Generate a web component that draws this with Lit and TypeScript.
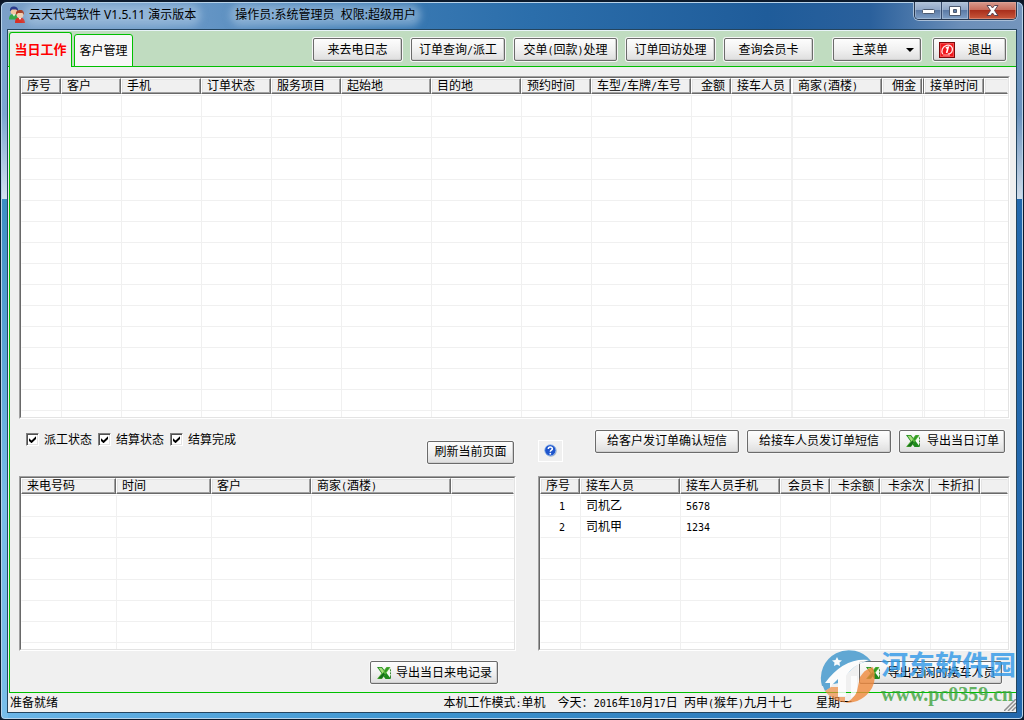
import { LitElement, html, css, svg, nothing } from "lit";
import { customElement, property } from "lit/decorators.js";
import { classMap } from "lit/directives/class-map.js";

/** Half-width runs are set in a narrow fixed-pitch face, two to one ideograph. */
const mixed = (text: string) =>
  text
    .split(/([\x20-\x7e]+)/)
    .filter((part) => part !== "")
    .map((part) => (/^[\x20-\x7e]/.test(part) ? html`<span class="half">${part}</span>` : part));

const baseText = css`
  :host {
    font: 12px/16px "Liberation Sans", "Noto Sans CJK SC", sans-serif;
    color: #000;
  }
  * {
    box-sizing: border-box;
  }
  .half {
    font-family: "DejaVu Sans Mono", monospace;
    font-size: 10px;
    line-height: 0;
    white-space: pre;
  }
`;

interface Column {
  label: string;
  width?: number;
  align?: "right" | "index";
}

@customElement("data-grid")
export class DataGrid extends LitElement {
  @property({ attribute: false }) columns: Column[] = [];
  @property({ attribute: false }) rows: string[][] = [];
  @property({ type: Number }) lines = 24;

  static styles = [
    baseText,
    css`
      :host {
        display: block;
        min-width: 0;
        min-height: 0;
        overflow: hidden;
        background: #fff;
        border: 1px solid #a0a0a0;
        border-right-color: #fff;
        border-bottom-color: #fff;
      }
      .well {
        height: 100%;
        overflow: hidden;
        border: 1px solid #696969;
        border-right-color: #e3e3e3;
        border-bottom-color: #e3e3e3;
      }
      table {
        width: 100%;
        table-layout: fixed;
        border-collapse: separate;
        border-spacing: 0;
      }
      th {
        padding: 0 0 1px;
        font-weight: normal;
        text-align: left;
      }
      .head {
        height: 16px;
        line-height: 15px;
        padding: 0 5px;
        overflow: hidden;
        white-space: nowrap;
        background: #f0f0f0;
        border: 1px solid #fff;
        border-right-color: #696969;
        border-bottom-color: #696969;
        box-shadow: inset -1px -1px #a0a0a0, inset 1px 1px #e3e3e3;
      }
      th:last-child .head {
        border-right-color: #f0f0f0;
        box-shadow: inset 0 -1px #a0a0a0, inset 1px 1px #e3e3e3;
      }
      .narrow .head {
        padding: 0;
      }
      td {
        height: 21px;
        padding: 0 5px;
        line-height: 20px;
        white-space: nowrap;
        overflow: hidden;
        border-top: 1px solid #f0f0f0;
        border-left: 1px solid #f0f0f0;
      }
      td:first-child {
        border-left-color: #fff;
      }
      td.narrow {
        padding: 0;
      }
      .right {
        text-align: right;
      }
      td.index {
        text-align: right;
        padding-right: 15px;
      }
    `,
  ];

  render() {
    const count = Math.max(this.lines, this.rows.length);
    const kind = (c: Column) =>
      classMap({
        right: c.align === "right",
        index: c.align === "index",
        narrow: (c.width ?? 99) < 3,
      });
    return html`<div class="well">
      <table>
        <colgroup>
          ${this.columns.map((c) => (c.width ? html`<col style="width:${c.width}px" />` : html`<col />`))}
        </colgroup>
        <thead>
          <tr>
            ${this.columns.map((c) => html`<th class=${kind(c)}><div class="head">${mixed(c.label)}</div></th>`)}
          </tr>
        </thead>
        <tbody>
          ${Array.from({ length: count }, (_, r) => html`<tr>
            ${this.columns.map((c, i) => html`<td class=${kind(c)}>${mixed(this.rows[r]?.[i] ?? "")}</td>`)}
          </tr>`)}
        </tbody>
      </table>
    </div>`;
  }
}

const excelIcon = svg`<svg class="icon" width="16" height="14" viewBox="0 0 16 14">
  <path d="M9.500 3H14.500V12H9z" fill="#f4fbf0" stroke="#b4d8ac" stroke-width="1"/>
  <path d="M14.500 3.500V5M14.500 6.500V8M14.500 9.500V12" stroke="#3a8a35"/>
  <path d="M1 1H6L15 13H9.500z" fill="#1d8a1c"/>
  <path d="M10.500 1H14.500L6 13H1z" fill="#58b53a"/>
  <path d="M2.500 1.700H5.500L8 5L6.500 7.500z" fill="#a5dc7a"/>
  <path d="M2 12.500L7.500 6.500L9 8.500L5.700 12.500z" fill="#16701b"/>
  <path d="M11 1.500H13.500L9.500 6.500L8.500 5z" fill="#2f9a26"/>
</svg>`;

const powerIcon = svg`<svg class="icon" width="16" height="16" viewBox="0 0 16 16">
  <rect x="0.500" y="0.500" width="15" height="15" fill="#f0181c" stroke="#7c0a0c"/>
  <rect x="1.500" y="1.500" width="13" height="13" fill="none" stroke="#ff6a6a" stroke-opacity="0.600"/>
  <path d="M3.800 12.200C1.800 9 3.300 4.300 7.600 3.300C11.500 2.500 14 5 13.300 8.300C12.800 11 10.500 12.300 9 11.800" fill="none" stroke="#ffe4e4" stroke-width="1.300"/>
  <path d="M4 13H11" stroke="#ffb0b0"/>
  <path d="M6.800 6L9.200 5.200L7.600 11" fill="none" stroke="#fff" stroke-width="1.600"/>
</svg>`;

const usersIcon = svg`<svg width="18" height="18" viewBox="0 0 18 18">
  <path d="M1 13.500C1 9 3 8 6 8s4 1.500 4.500 5.500z" fill="#37a84a"/>
  <path d="M4.500 8L6 10.500L7.500 8z" fill="#fff"/>
  <circle cx="6" cy="5" r="3.500" fill="#f3c7a2"/>
  <path d="M2 5.500C1.500 1 4 0.300 6.500 0.500S10.500 3 10 5L8 3.500H4z" fill="#2b3c8d"/>
  <path d="M7 17C7 12 9 11.500 12 11.500s4.500 1.500 5 5.500z" fill="#d93025"/>
  <path d="M10.500 11.500L12 14L13.500 11.500z" fill="#fff"/>
  <circle cx="12" cy="8.500" r="3.500" fill="#f6cfae"/>
  <path d="M8 9C7.500 4.500 10 4 12.500 4S16.500 6 16 9L14.500 7H10z" fill="#a63a22"/>
</svg>`;

const helpIcon = svg`<svg width="13" height="13" viewBox="0 0 13 13">
  <circle cx="7" cy="7" r="5.700" fill="#a9b4bf"/>
  <circle cx="6.300" cy="6.300" r="5.600" fill="#1f55cc" stroke="#9cc0ef" stroke-width="0.800"/>
  <path d="M4.300 5C4.300 2.500 8.500 2.500 8.400 4.900C8.300 6.300 6.400 6.200 6.300 7.700" fill="none" stroke="#fff" stroke-width="1.500"/>
  <circle cx="6.300" cy="9.700" r="0.900" fill="#fff"/>
</svg>`;

const siteLogo = svg`<svg class="logo" width="58" height="58" viewBox="0 0 58 58">
  <path d="M3 39A28 28 0 0 1 52 14Q40 14 30 25L20 36L3 39z" fill="#3d96cc"/>
  <path d="M3 37L11 36V41L6 44z" fill="#3d96cc"/>
  <path d="M6 44L12 40H19V50H26V55.500Q13 54 6 44z" fill="#f08a3c" fill-opacity="0.850"/>
  <path d="M54 20Q58 32 53 41Q44 56 26 56Q34 53 38 44L41 30Q46 22 54 20z" fill="#f08a3c"/>
  <path d="M6 36Q25 10 50 13Q34 18 27 29V49H19V32L11 40V36z" fill="#fff"/>
  <path d="M32 29H38V43Q37 49 32 51z" fill="#fff"/>
  <path d="M18 10l1.500 3 3.500.500-2.500 2 .500 3.500-3-1.500-3 1.500.500-3.500-2.500-2 3.500-.500z" fill="#fff"/>
</svg>`;

const orderColumns: Column[] = [
  { label: "序号", width: 40 },
  { label: "客户", width: 60 },
  { label: "手机", width: 80 },
  { label: "订单状态", width: 70 },
  { label: "服务项目", width: 70 },
  { label: "起始地", width: 90 },
  { label: "目的地", width: 90 },
  { label: "预约时间", width: 70 },
  { label: "车型/车牌/车号", width: 100 },
  { label: "金额", width: 40, align: "right" },
  { label: "接车人员", width: 60 },
  { label: "", width: 1 },
  { label: "商家(酒楼)", width: 90 },
  { label: "佣金", width: 40, align: "right" },
  { label: "", width: 2 },
  { label: "接单时间", width: 60 },
  { label: "" },
];

const callColumns: Column[] = [
  { label: "来电号码", width: 95 },
  { label: "时间", width: 95 },
  { label: "客户", width: 100 },
  { label: "商家(酒楼)", width: 140 },
  { label: "" },
];

const driverColumns: Column[] = [
  { label: "序号", width: 40, align: "index" },
  { label: "接车人员", width: 100 },
  { label: "接车人员手机", width: 100 },
  { label: "会员卡", width: 50, align: "right" },
  { label: "卡余额", width: 50, align: "right" },
  { label: "卡余次", width: 50, align: "right" },
  { label: "卡折扣", width: 50, align: "right" },
  { label: "" },
];

const drivers = [
  ["1", "司机乙", "5678"],
  ["2", "司机甲", "1234"],
];

@customElement("app-root")
export class AppRoot extends LitElement {
  static styles = [
    baseText,
    css`
      :host {
        display: block;
        height: 100vh;
        background: #0b1626;
      }
      button {
        font: inherit;
        color: inherit;
        margin: 0;
        padding: 0;
        cursor: default;
      }
      .window {
        position: relative;
        height: 100%;
        display: flex;
        flex-direction: column;
        padding: 0 6px 6px;
        border: 1px solid #0c1a2c;
        border-width: 2px 1px 1px;
        border-radius: 7px 7px 5px 5px;
        overflow: hidden;
        background:
          linear-gradient(90deg, #7ba0c8 0, #6f9cc9 15%, #3878b2 40%, #2b6eab 52%, #1f5c9a 75%, #2a609c 85%, #6c8fb9 94%, #7495bc) 0 0 / 100% 28px no-repeat,
          linear-gradient(#78a3cf, #7ba7d3 50%, #d3e2ef) 0 28px / 7px 169px no-repeat,
          linear-gradient(#6f92bb, #6b93bf 50%, #d0dce9) 100% 28px / 7px 169px no-repeat,
          linear-gradient(#3d8fc4 28%, #78bde9 70%) 0 0 / 7px 100% no-repeat,
          linear-gradient(90deg, #6bb6e8, #3e95d0 40%, #2268ad);
        box-shadow: inset 0 0 0 1px #b8d3ea;
      }
      .title {
        flex: none;
        display: flex;
        align-items: flex-start;
        height: 27px;
      }
      .caption {
        display: flex;
        align-items: center;
        height: 26px;
        padding-left: 1px;
        font-family: "Noto Sans", "Noto Sans CJK SC", sans-serif;
        white-space: pre;
      }
      .caption svg {
        margin-right: 3px;
      }
      .glow {
        height: 12px;
        line-height: 12px;
        border-radius: 6px;
        background: #b4cee680;
        box-shadow: 0 0 7px 5px #b4cee680;
      }
      .operator {
        margin-left: 39px;
      }
      .controls {
        display: flex;
        margin-left: auto;
        border: 1px solid #26374f;
        border-top: 0;
        border-radius: 0 0 5px 5px;
        overflow: hidden;
        box-shadow: 0 0 0 1px #a9bfd8;
      }
      .controls button {
        display: grid;
        place-items: center;
        width: 27px;
        height: 17px;
        border: 0;
        border-right: 1px solid #34486a;
        background: linear-gradient(#b1c2d9, #8da5c6 48%, #5c7ba6 50%, #7f9fc6);
        box-shadow: inset 0 0 0 1px #b9cade88;
      }
      .controls .close {
        width: 47px;
        border-right: 0;
        background: linear-gradient(#d79a8e, #c66a59 48%, #a92f1c 50%, #c9583c);
        box-shadow: inset 0 0 0 1px #e3aa9c88;
      }
      .client {
        flex: 1;
        min-height: 0;
        display: flex;
        flex-direction: column;
        border: 1px solid #24455f;
        background: #f0f0f0;
      }
      .toolbar {
        flex: none;
        display: flex;
        align-items: flex-end;
        height: 37px;
        padding: 0 10px 0 1px;
        background: #c0dcc0;
        border-top: 1px solid #e8f3f8;
        border-bottom: 1px solid #00c000;
      }
      .tab {
        height: 33px;
        width: 59px;
        border: 1px solid #00c000;
        border-radius: 3px 3px 0 0;
        background: #f7f7f7;
        margin: 0 0 -1px 2px;
      }
      .tab.active {
        width: 63px;
        height: 35px;
        margin-left: 0;
        border-bottom: 0;
        background: #f0f0f0;
        color: #f00;
        font-weight: bold;
        font-size: 13px;
      }
      .commands {
        display: flex;
        gap: 9px;
        margin: 0 0 5px auto;
      }
      .btn {
        display: flex;
        align-items: center;
        justify-content: center;
        height: 23px;
        padding: 0 10px;
        white-space: nowrap;
        background: linear-gradient(#fdfdfd, #f1f1f1 50%, #dedede);
        border: 1px solid #6b6b6b;
        border-radius: 2px;
        box-shadow: 0 0 0 1px #f6f6f6, inset -1px -1px #cfcfcf;
      }
      .commands .btn {
        min-width: 89px;
        padding: 0 7px;
      }
      .commands .wide {
        min-width: 103px;
      }
      .commands .menu {
        min-width: 88px;
        margin-left: 11px;
        padding: 0 6px 0 18px;
        justify-content: space-between;
      }
      .commands .exit {
        min-width: 73px;
        margin-left: 3px;
        padding: 0 13px 0 5px;
        justify-content: space-between;
      }
      .caret {
        border: 4px solid transparent;
        border-top-color: #000;
        border-bottom: 0;
      }
      .page {
        flex: 1;
        min-height: 0;
        display: flex;
        flex-direction: column;
        margin-left: 1px;
        padding: 9px 6px 0 9px;
        border-left: 1px solid #00c000;
        border-bottom: 1px solid #00c000;
      }
      .orders {
        flex: 342 1 0;
      }
      .split {
        display: grid;
        grid-template-columns: 497fr 472fr;
        column-gap: 22px;
      }
      .middle {
        flex: none;
        height: 57px;
      }
      .lists {
        flex: 176 1 0;
        min-height: 0;
        grid-template-rows: minmax(0, 1fr);
      }
      .exports {
        flex: none;
        padding: 10px 0 8px;
        justify-items: end;
      }
      .row {
        display: flex;
        align-items: flex-start;
      }
      .checks {
        display: flex;
        gap: 6px;
        padding: 13px 0 0 7px;
      }
      .checks label {
        display: flex;
        align-items: center;
        gap: 5px;
      }
      .checks input {
        appearance: none;
        display: grid;
        place-items: center;
        width: 13px;
        height: 13px;
        margin: 0;
        background: #fff;
        border: 1px solid #808080;
        border-right-color: #fff;
        border-bottom-color: #fff;
        box-shadow: inset 1px 1px #505050, inset -1px -1px #e3e3e3;
      }
      .checks input:checked::before {
        content: "";
        width: 7px;
        height: 7px;
        background: #000;
        clip-path: polygon(0 28%, 36% 62%, 100% 0, 100% 40%, 36% 100%, 0 68%);
      }
      .refresh {
        width: 87px;
        margin: 22px 2px 0 auto;
        padding: 0;
      }
      .help {
        display: grid;
        place-items: center;
        width: 25px;
        height: 22px;
        margin-top: 21px;
        background: #f0f0f0;
        border: 1px solid #fff;
      }
      .sends {
        display: flex;
        gap: 8px;
        margin: 11px 5px 0 auto;
      }
      .sends .btn {
        min-width: 106px;
        padding: 0 11px;
      }
      .excel {
        gap: 4px;
        padding: 0 5px;
      }
      .sends .excel {
        gap: 6px;
        padding: 0 5px;
      }
      .calls {
        margin-right: 18px;
      }
      .idle {
        width: 143px;
        gap: 6px;
        margin-right: 8px;
      }
      .status {
        flex: none;
        display: flex;
        height: 19px;
        padding: 1px 0 0 2px;
        line-height: 18px;
        white-space: nowrap;
      }
      .mode {
        margin-left: auto;
        margin-right: 12px;
      }
      .weekday {
        width: 212px;
        padding-left: 24px;
      }
      .grip {
        align-self: flex-end;
        margin-bottom: 1px;
      }
      .watermark {
        position: absolute;
        right: 7px;
        bottom: 12px;
        display: flex;
        align-items: flex-start;
        opacity: 0.8;
        pointer-events: none;
      }
      .site {
        padding-top: 3px;
        margin-left: 4px;
        white-space: nowrap;
      }
      .site-name {
        font-size: 27px;
        line-height: 32px;
        font-weight: bold;
        color: #2f98e8;
      }
      .site-url {
        font: bold 20px/25px "Liberation Serif", serif;
        color: #3fa33f;
      }
    `,
  ];

  private check(label: string) {
    return html`<label><input type="checkbox" checked />${label}</label>`;
  }

  private button(label: string, kind = "", icon: unknown = nothing, after: unknown = nothing) {
    return html`<button type="button" class="btn ${kind}">${icon}<span>${mixed(label)}</span>${after}</button>`;
  }

  render() {
    return html`<div class="window">
      <header class="title">
        <div class="caption">${usersIcon}<span class="glow">云天代驾软件 V1.5.11 演示版本</span><span class="glow operator">操作员:系统管理员  权限:超级用户</span></div>
        <div class="controls">
          <button type="button" aria-label="最小化">
            <svg width="13" height="6" viewBox="0 0 13 6"><rect x="0.500" y="1.500" width="12" height="4" rx="1" fill="#fff" stroke="#4c5a70" /></svg>
          </button>
          <button type="button" aria-label="最大化">
            <svg width="12" height="10" viewBox="0 0 12 10">
              <path d="M0.500 0.500H11.500V9.500H0.500zM4.500 3.500V6.500H7.500V3.500z" fill="#fff" fill-rule="evenodd" stroke="#4c5a70" />
            </svg>
          </button>
          <button type="button" class="close" aria-label="关闭">
            <svg width="13" height="11" viewBox="0 0 13 11">
              <path d="M1 0.500H4.500L6.500 3L8.500 0.500H12L8.500 5.500L12 10.500H8.500L6.500 8L4.500 10.500H1L4.500 5.500z" fill="#fff" stroke="#5a4450" />
            </svg>
          </button>
        </div>
      </header>
      <main class="client">
        <nav class="toolbar">
          <button type="button" class="tab active">当日工作</button>
          <button type="button" class="tab">客户管理</button>
          <div class="commands">
            ${this.button("来去电日志")} ${this.button("订单查询/派工")} ${this.button("交单(回款)处理", "wide")}
            ${this.button("订单回访处理")} ${this.button("查询会员卡")}
            ${this.button("主菜单", "menu", nothing, html`<i class="caret"></i>`)}
            ${this.button("退出", "exit", powerIcon)}
          </div>
        </nav>
        <section class="page">
          <data-grid class="orders" .columns=${orderColumns}></data-grid>
          <div class="split middle">
            <div class="row">
              <div class="checks">${this.check("派工状态")}${this.check("结算状态")}${this.check("结算完成")}</div>
              ${this.button("刷新当前页面", "refresh")}
            </div>
            <div class="row">
              <button type="button" class="help" aria-label="帮助">${helpIcon}</button>
              <div class="sends">
                ${this.button("给客户发订单确认短信")} ${this.button("给接车人员发订单短信")}
                ${this.button("导出当日订单", "excel", excelIcon)}
              </div>
            </div>
          </div>
          <div class="split lists">
            <data-grid .columns=${callColumns}></data-grid>
            <data-grid .columns=${driverColumns} .rows=${drivers}></data-grid>
          </div>
          <div class="split exports">
            ${this.button("导出当日来电记录", "excel calls", excelIcon)}
            ${this.button("导出空闲的接车人员", "excel idle", excelIcon)}
          </div>
        </section>
        <footer class="status">
          <span>准备就绪</span>
          <span class="mode">${mixed("本机工作模式:单机")}</span>
          <span>${mixed("今天：2016年10月17日 丙申(猴年)九月十七")}</span>
          <span class="weekday">星期一</span>
          <svg class="grip" width="12" height="12" viewBox="0 0 12 12">
            <path d="M0 12L12 0M4 12L12 4M8 12L12 8" stroke="#8e8e8e" stroke-width="1.500" />
          </svg>
        </footer>
      </main>
      <div class="watermark">
        ${siteLogo}
        <div class="site">
          <div class="site-name">河东软件园</div>
          <div class="site-url">www.pc0359.cn</div>
        </div>
      </div>
    </div>`;
  }
}
